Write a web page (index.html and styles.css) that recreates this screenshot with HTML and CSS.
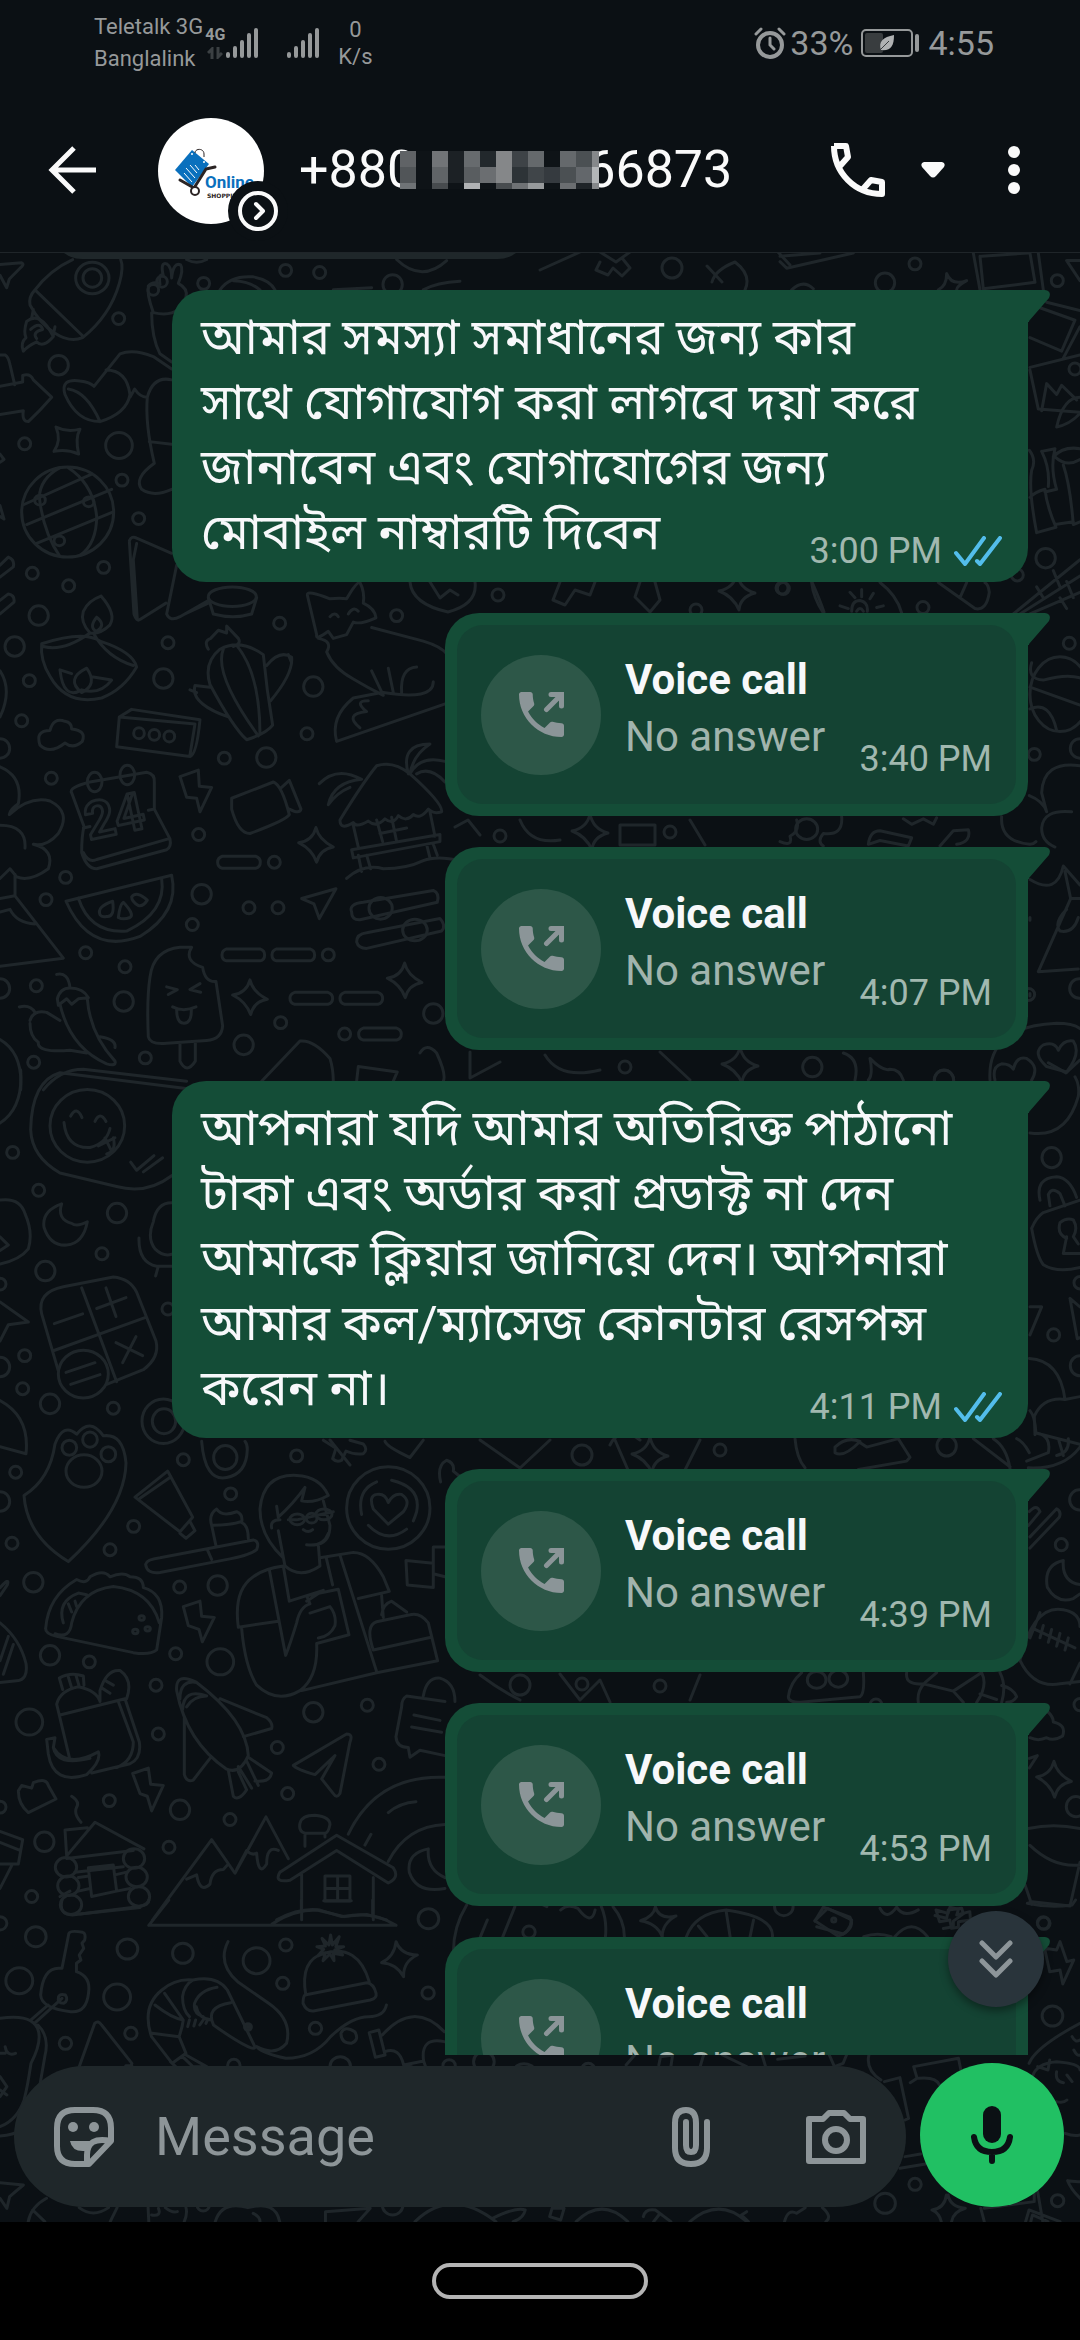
FILE: index.html
```html
<!DOCTYPE html>
<html lang="bn">
<head>
    <meta charset="UTF-8">
    <meta name="viewport" content="width=device-width, initial-scale=1">
    <title>Chat</title>
    <link rel="stylesheet" href="styles.css">
</head>
<body>

<!-- shared icons -->
<svg class="defs" width="0" height="0" aria-hidden="true">
    <symbol id="icon-call-out" viewBox="3 3 18 18">
        <path fill="currentColor" d="M6.62 10.79c1.44 2.83 3.76 5.14 6.59 6.59l2.2-2.2c.27-.27.67-.36 1.02-.24 1.12.37 2.33.57 3.57.57.55 0 1 .45 1 1V20c0 .55-.45 1-1 1-9.39 0-17-7.61-17-17 0-.55.45-1 1-1h3.5c.55 0 1 .45 1 1 0 1.25.2 2.45.57 3.57.11.35.03.74-.25 1.02l-2.2 2.2z"/>
        <path fill="none" stroke="currentColor" stroke-width="2" stroke-linecap="round" d="M14 10L19.6 4.4M15.8 4H20V8.6"/>
    </symbol>
    <symbol id="icon-read" viewBox="0 0 48 30">
        <path fill="none" stroke="#53bdeb" stroke-width="4" stroke-linecap="round" stroke-linejoin="round" d="M2 17L11 28L30 2M23 25L26 28L46 2"/>
    </symbol>
    <symbol id="icon-tail" viewBox="0 0 23 32">
        <path fill="#144d37" d="M0 0H17Q24 1 21 8L1 31V32H0Z"/>
    </symbol>
    <symbol id="icon-signal" viewBox="0 0 34 32">
        <path fill="none" stroke="currentColor" stroke-width="4" stroke-linecap="round" d="M3 27V29M10 21V29M17 15V29M24 8V29M31 3V29"/>
    </symbol>
</svg>

<div class="phone">
    <div class="status">
        <div class="carriers">
            <span>Teletalk 3G</span>
            <span>Banglalink</span>
        </div>
        <div class="network">
            <span>4G</span>
            <svg viewBox="0 0 16 12" width="16" height="12"><path d="M5 12V2L1 6M11 0V10L15 6" fill="none" stroke="#3b4043" stroke-width="3"/></svg>
        </div>
        <svg class="signal" aria-hidden="true"><use href="#icon-signal"/></svg>
        <svg class="signal signal-two" aria-hidden="true"><use href="#icon-signal"/></svg>
        <div class="speed">
            <span>0</span>
            <span>K/s</span>
        </div>
        <div class="status-right">
            <svg width="32" height="32" viewBox="0 0 32 32" fill="none" stroke="currentColor" stroke-width="4" aria-hidden="true">
                <circle cx="16" cy="18" r="12"/>
                <path stroke-width="3" stroke-linecap="round" d="M2 7L7 2M25 2L30 7M16 11V18L20 22"/>
            </svg>
            <span>33%</span>
            <svg class="battery" width="59" height="28" viewBox="0 0 59 28" aria-hidden="true">
                <rect x="1" y="1" width="50" height="26" rx="4" fill="none" stroke="currentColor" stroke-width="2"/>
                <rect x="4" y="4" width="18" height="20" rx="2" fill="#393d3f"/>
                <rect x="54" y="5" width="4" height="18" rx="2" fill="currentColor"/>
                <path d="M33 6C33 17 30 22 20 21C17 13 22 8 33 6Z" fill="#b0b2b3"/>
                <path d="M18 22L28 12" stroke="#393d3f" stroke-width="1"/>
            </svg>
            <span>4:55</span>
        </div>
    </div>

    <header class="appbar">
        <button class="icon-btn" type="button" aria-label="Back">
            <svg width="48" height="48" viewBox="0 0 48 48" fill="none" stroke="currentColor" stroke-width="5"><path d="M26 2L4 24L26 46M4 24H48"/></svg>
        </button>
        <div class="avatar">
            <svg width="122" height="122" viewBox="0 0 122 122" role="img" aria-label="Online Shopping">
                <circle cx="54" cy="54" r="53" fill="#fff"/>
                <path d="M35 33L52 47L35 70L18 53Z" fill="#0a70bd"/>
                <path d="M38 36C38 31 47 31 47 37V40" fill="none" stroke="#2b2424" stroke-width="1"/>
                <path d="M27 56L35 65M29 51L38 61M33 48L40 56M38 48L42 53" fill="none" stroke="#fff" stroke-width="1"/>
                <circle cx="35" cy="37" r="1" fill="#fff"/><circle cx="47" cy="45" r="1" fill="#fff"/>
                <path d="M58 50L49 52L37 71L23 63" fill="none" stroke="#2b2424" stroke-width="3" stroke-linecap="round" stroke-linejoin="round"/>
                <circle cx="38" cy="74" r="4" fill="#fff" stroke="#2b2424" stroke-width="2"/>
                <text class="logo-name" x="48" y="71">Online</text>
                <text class="logo-sub" x="50" y="81">SHOPPING</text>
                <circle cx="101" cy="94" r="30" fill="#0b1014"/>
                <circle cx="101" cy="94" r="18" fill="none" stroke="#fafafa" stroke-width="4"/>
                <path d="M99 87L106 94L99 101" fill="none" stroke="#fafafa" stroke-width="4" stroke-linecap="round" stroke-linejoin="round"/>
            </svg>
        </div>
        <h1 class="contact">
            <span>+880</span>
            <svg class="mask" viewBox="0 0 199 38" shape-rendering="crispEdges" aria-hidden="true">
                <rect width="199" height="38" fill="#0e1317"/>
                <path fill="#606366" d="M0 0h16v16H0z"/><path fill="#515558" d="M0 16h16v16H0z"/><path fill="#6f7376" d="M0 32h16v6H0z"/>
                <path fill="#717477" d="M32 0h16v16H32z"/><path fill="#606467" d="M32 16h16v16H32z"/><path fill="#474b4e" d="M32 32h16v6H32z"/>
                <path fill="#1c2125" d="M48 0h16v32H48z"/><path fill="#676b6e" d="M64 0h16v16H64z"/><path fill="#595d60" d="M64 16h16v16H64z"/><path fill="#b0b2b4" d="M64 32h16v6H64z"/>
                <path fill="#22282c" d="M80 0h16v16H80z"/><path fill="#6b6e71" d="M80 16h16v16H80z"/>
                <path fill="#858789" d="M96 0h16v32H96z"/><path fill="#484c4f" d="M96 32h16v6H96z"/>
                <path fill="#3e4347" d="M112 0h16v16H112z"/><path fill="#2d3337" d="M112 16h16v16H112z"/><path fill="#6f7275" d="M112 32h16v6H112z"/>
                <path fill="#65696c" d="M128 0h16v16H128z"/><path fill="#404549" d="M128 16h16v16H128z"/><path fill="#979a9c" d="M128 32h16v6H128z"/>
                <path fill="#353a3f" d="M144 16h16v16H144z"/>
                <path fill="#65696c" d="M160 0h16v16H160z"/><path fill="#4b5053" d="M160 16h16v16H160zM176 0h16v16H176z"/><path fill="#6b6e71" d="M160 32h16v6H160z"/>
                <path fill="#63676b" d="M176 16h16v16H176z"/><path fill="#1f2428" d="M176 32h16v6H176z"/>
                <path fill="#85888a" d="M192 0h7v16H192zM192 32h7v6H192z"/><path fill="#b3b6b8" d="M192 16h7v16H192z"/>
            </svg>
            <span>66873</span>
        </h1>
        <button class="icon-btn" type="button" aria-label="Voice call">
            <svg width="54" height="54" viewBox="0 0 54 54" fill="none" stroke="currentColor" stroke-width="6" stroke-linejoin="round"><path d="M3 3H15L17 14L9 23M3 3C3 30 24 51 51 51V39L40 37L32 46"/></svg>
        </button>
        <button class="icon-btn call-more" type="button" aria-label="Call options">
            <svg width="24" height="16" viewBox="0 0 24 16"><path fill="currentColor" d="M3 0H21Q25 1 23 5L15 14Q12 17 9 14L1 5Q-1 1 3 0Z"/></svg>
        </button>
        <button class="icon-btn menu" type="button" aria-label="More options">
            <svg width="12" height="48" viewBox="0 0 12 48" fill="currentColor"><circle cx="6" cy="6" r="6"/><circle cx="6" cy="24" r="6"/><circle cx="6" cy="42" r="6"/></svg>
        </button>
    </header>

    <main class="chat">
        <!-- doodle wallpaper -->
        <svg class="doodles" viewBox="0 253 1080 1969" preserveAspectRatio="xMidYMin slice" aria-hidden="true">
            <defs>
                <ellipse id="s" rx="18" ry="11"/>
                <ellipse id="m" rx="29" ry="18"/>
                <ellipse id="l" rx="40" ry="24"/>
                <circle id="d" r="6"/>
                <circle id="e" r="10"/>
                <circle id="f" r="13"/>
                <path id="spark" d="M0 -32Q8 -10 52 4Q12 8 2 32Q-12 8 -52 -4Q-10 -8 0 -32Z"/>
                <path id="star" d="M0 -18Q3 -3 18 1Q3 5 2 18Q-4 4 -18 -1Q-3 -4 0 -18Z"/>
                <path id="dash" d="M-50 -11H50Q64 -8 64 0Q64 9 50 11H-50Q-64 9 -64 0Q-64 -8 -50 -11Z"/>
            </defs>

            <g transform="translate(0 240) scale(.3333 .542)">
                <path d="M0 45L65 42Q75 45 60 52L28 72L20 88L0 65"/>
                <path d="M105 92Q150 55 218 36M105 92Q85 105 90 120Q120 155 165 172Q210 190 248 180Q330 140 358 80Q372 50 362 36M105 92L250 178M100 128L95 145M165 160L160 175"/>
                <ellipse cx="277" cy="70" rx="50" ry="29"/><ellipse cx="277" cy="70" rx="28" ry="17"/>
                <path d="M160 178Q120 130 80 150Q70 170 78 180Q60 190 70 205Q85 195 110 188Q130 200 160 178M92 165Q120 150 128 165Q95 170 110 182"/>
                <path d="M460 134Q440 100 445 85Q460 75 480 82Q475 60 490 66Q480 40 500 44Q515 50 515 70Q520 40 542 46Q552 55 535 80Q565 90 558 105Q540 145 460 134ZM455 134Q455 180 480 210L515 225"/>
                <ellipse cx="486" cy="77" rx="16" ry="10"/><ellipse cx="460" cy="92" rx="16" ry="10"/>
                <path d="M660 92Q690 65 760 68Q810 74 825 92M700 75Q750 76 780 92M1000 92L1115 88M560 36Q590 46 620 36M1190 36Q1265 80 1340 38M1270 92Q1310 78 1380 76"/>
                <path d="M0 212H15Q25 215 30 230L44 267M0 270L68 262V250Q90 245 100 258L155 290Q120 315 85 335Q65 335 70 315L0 322"/>
                <path d="M195 285Q180 255 240 260Q270 262 282 270L360 210Q400 200 460 215L515 238M195 285Q230 335 300 335Q380 320 390 285Q380 240 318 240M205 275Q260 280 300 335M390 290L404 275Q420 290 440 290M515 258Q460 250 442 290Q435 340 463 412Q400 440 425 460Q460 475 515 460M448 372L515 377"/>
                <path d="M168 345Q200 355 240 349Q225 365 236 395Q200 385 162 390Q185 370 168 345Z"/>
                <ellipse cx="203" cy="502" rx="138" ry="83"/>
                <path d="M72 488L275 432M80 525L335 460M108 560L338 502M180 420Q120 440 118 475Q130 540 180 584M205 420Q280 450 290 510Q290 560 240 582"/>
                <ellipse cx="120" cy="480" rx="16" ry="9"/><ellipse cx="266" cy="483" rx="16" ry="9"/><ellipse cx="178" cy="555" rx="16" ry="9"/>
                <path d="M388 555Q395 545 410 550L515 578M388 555L402 690Q410 705 420 700L498 670M410 560L400 590L412 700M530 600L500 690Q510 705 540 695L625 665M555 690L625 670"/>
                <ellipse cx="697" cy="658" rx="72" ry="18"/><path d="M625 660L640 690Q700 700 755 690L770 660"/>
                <path d="M0 395L12 405L0 410M0 490L12 515L0 510M0 600L25 585Q45 590 40 603L0 622M0 665L25 653Q45 655 42 668L0 690M0 795Q38 830 0 880"/>
                <path d="M303 657Q350 690 330 710Q300 728 270 725Q240 705 250 685Q265 665 303 657M290 696Q320 710 290 722Q265 715 290 696M125 745Q250 720 300 740Q400 760 410 788Q370 830 305 845Q200 860 150 805Q120 775 125 745ZM130 750Q190 760 270 725M280 725Q320 770 400 785M215 800L180 793Q190 850 245 830Q300 840 335 812L275 806M245 835Q195 810 260 790Q295 820 245 835Z"/>
                <path d="M625 755Q610 740 632 735L655 720L680 725L680 712L715 735Q725 745 700 750M630 820Q610 780 660 755Q720 735 790 765Q800 830 818 895Q800 910 740 922Q700 900 630 820ZM670 755Q640 800 775 915M710 748Q780 800 780 912M800 785Q840 755 875 770Q880 800 812 850M630 825L585 822Q570 855 685 880M570 830L590 835M865 765L875 780"/>
                <path d="M358 880L395 866L600 885Q590 950 570 953L350 935ZM358 880L585 893L570 950"/>
                <ellipse cx="417" cy="910" rx="16" ry="10"/><ellipse cx="463" cy="913" rx="16" ry="10"/><ellipse cx="508" cy="916" rx="16" ry="10"/>
                <path d="M120 932Q105 905 150 905Q160 880 195 888Q215 890 215 902Q260 905 247 925Q220 940 195 928Q150 950 120 932Z"/>
                <path d="M922 655Q920 645 990 662Q1020 660 1040 662Q1070 630 1080 632Q1095 650 1090 670Q1125 680 1128 697Q1080 710 1060 705L1040 728L1000 735L985 722Q945 740 950 728ZM1045 690Q1060 675 1075 685M990 695Q1005 685 1015 695M1115 715L1270 740Q1380 760 1340 800M955 735Q1000 740 980 760Q1000 790 1060 810Q1100 825 1150 840L1115 795M1150 835Q1300 850 1300 815M1180 835L1165 790M1205 835Q1200 790 1250 788M1340 855L1010 925Q990 880 1060 845L1145 835M1105 850Q1060 850 1100 870Q1030 875 1080 900"/>
                <path d="M215 1020Q205 1010 270 1000L440 982Q465 985 463 1000V1050L510 1105Q515 1120 500 1125L290 1160Q260 1160 245 1130Q245 1100 252 1082ZM250 1085L270 1082M445 1052L463 1050M250 1130Q265 1150 290 1143L505 1105"/>
                <ellipse cx="284" cy="1000" rx="22" ry="18"/><ellipse cx="382" cy="987" rx="22" ry="18"/>
                <path d="M540 990L595 978L598 1008L635 1010L600 1055L590 1030L560 1028ZM695 1030L820 1000Q845 1005 868 1060Q860 1070 750 1095Q715 1095 695 1050ZM845 1010L868 997L903 1050Q900 1060 868 1050"/>
                <path d="M0 972Q70 990 55 1040Q30 1050 28 1060Q90 1025 150 1035Q215 1055 175 1095Q140 1120 100 1115Q165 1125 145 1160Q90 1185 50 1175L30 1160L0 1178M0 1080Q80 1080 75 1122M45 1170V1210L190 1325L0 1340M0 1215L45 1210M0 1240L30 1235Q50 1260 105 1262"/>
                <path d="M958 1003Q1010 970 1085 995Q1000 1000 985 1042Q1010 1020 1050 1010M1020 1070Q1090 1000 1130 970Q1180 960 1230 985Q1330 1040 1325 1055Q1300 1060 1285 1050Q1260 1070 1240 1060Q1220 1075 1195 1062Q1180 1080 1155 1068Q1130 1085 1105 1072Q1070 1085 1060 1075Q1020 1090 1020 1070ZM1225 985Q1200 930 1290 930Q1240 950 1230 985Q1260 950 1335 962M1250 985Q1290 970 1335 1000M1060 1080L1075 1120M1290 1055L1305 1100M1130 1070L1148 1110M1175 1065L1190 1110M1055 1125L1320 1097L1320 1110L1060 1140ZM1075 1135L1085 1165M1100 1135L1112 1160M1280 1115L1290 1140M1300 1115L1312 1135M1140 1095L1220 1085M1040 1178Q1090 1150 1150 1160Q1220 1160 1270 1145Q1310 1135 1380 1145"/>
                <path d="M198 1220L515 1172Q540 1240 420 1285Q270 1320 198 1220ZM235 1214Q270 1280 380 1275Q500 1240 485 1178M300 1245Q290 1230 338 1220Q345 1250 320 1248Q305 1250 300 1245M355 1250Q360 1225 370 1222Q405 1245 390 1250Q370 1255 355 1250M395 1212Q410 1200 442 1218Q430 1230 415 1228Q395 1220 395 1212"/>
                <path d="M905 1215L1008 1197L958 1252L942 1225ZM1055 1240Q1045 1225 1090 1222L1300 1200Q1320 1205 1312 1222L1080 1254Q1055 1255 1055 1240ZM1070 1295Q1070 1280 1100 1278L1320 1252Q1340 1265 1325 1275L1100 1307Q1075 1307 1070 1295Z"/>
                <ellipse cx="1142" cy="1233" rx="35" ry="20"/><ellipse cx="1245" cy="1273" rx="37" ry="20"/>
                <path d="M445 1470Q440 1400 450 1360Q460 1310 540 1305H575Q550 1330 608 1342Q615 1370 648 1368L668 1450Q665 1475 620 1477L500 1482Q450 1485 445 1470ZM540 1482V1515Q560 1540 586 1515V1480M500 1378L532 1383L505 1392M600 1372L570 1383L602 1388M518 1415Q550 1425 588 1415M530 1420Q530 1445 552 1445Q575 1445 574 1420"/>
                <path d="M170 1355Q205 1350 210 1380M172 1400Q180 1380 210 1380Q250 1380 265 1398L235 1400L215 1410L200 1400L175 1412ZM262 1400Q270 1465 345 1515Q350 1525 320 1520Q210 1490 180 1410M58 1415Q90 1410 105 1425M90 1440Q100 1420 140 1425L180 1440M90 1445Q90 1470 115 1480Q110 1500 210 1495L260 1500M300 1470Q350 1475 345 1490"/>
                <path d="M0 1475Q70 1500 62 1568M130 1568Q180 1530 250 1530L560 1552M785 1552L900 1478Q940 1475 990 1510Q1000 1530 1000 1552M1070 1552L1075 1525L1192 1535L1180 1552M1260 1500Q1280 1480 1310 1500Q1340 1540 1330 1552"/>
                <use href="#spark" x="948" y="1116"/><use href="#spark" x="750" y="1397"/><use href="#spark" x="1214" y="1366"/>
                <use href="#dash" x="717" y="1148"/><use href="#dash" x="730" y="1319"/><use href="#dash" x="880" y="1319"/><use href="#dash" x="934" y="1399"/><use href="#dash" x="1084" y="1399"/><use href="#dash" x="1140" y="1465"/>
                <use href="#s" x="356" y="145"/><use href="#s" x="611" y="80"/><use href="#s" x="857" y="56"/><use href="#s" x="959" y="60"/><use href="#m" x="1178" y="82"/>
                <use href="#m" x="176" y="231"/><use href="#s" x="74" y="376"/><use href="#l" x="357" y="379"/><use href="#s" x="366" y="443"/><use href="#s" x="416" y="514"/><use href="#s" x="311" y="604"/>
                <use href="#s" x="97" y="615"/><use href="#s" x="206" y="638"/><use href="#m" x="116" y="693"/><use href="#m" x="44" y="750"/><use href="#s" x="88" y="813"/><use href="#s" x="504" y="743"/><use href="#m" x="490" y="809"/>
                <use href="#s" x="839" y="707"/><use href="#m" x="940" y="824"/><use href="#s" x="921" y="911"/><use href="#s" x="1190" y="693"/><use href="#s" x="65" y="887"/><use href="#m" x="0" y="938"/><use href="#s" x="154" y="993"/>
                <use href="#s" x="673" y="956"/><use href="#m" x="799" y="955"/><use href="#s" x="596" y="1097"/><use href="#s" x="823" y="1148"/><use href="#m" x="605" y="1207"/><use href="#s" x="747" y="1232"/><use href="#s" x="834" y="1232"/><use href="#s" x="577" y="1263"/>
                <use href="#s" x="197" y="1176"/><use href="#s" x="138" y="1217"/><use href="#s" x="257" y="1315"/><use href="#s" x="375" y="1341"/><use href="#m" x="371" y="1405"/><use href="#s" x="109" y="1376"/><use href="#m" x="0" y="1381"/><use href="#s" x="985" y="1319"/>
                <use href="#s" x="842" y="1444"/><use href="#m" x="731" y="1485"/><use href="#s" x="1034" y="1465"/><use href="#m" x="1300" y="1427"/><use href="#s" x="436" y="1509"/><use href="#s" x="101" y="1517"/>
            </g>
            <text x="89" y="840" transform="rotate(-12 89 840)">24</text>

            <g transform="translate(0 1070) scale(.3333 .542)">
                <path d="M92 110Q95 20 180 5L570 35M92 110Q95 160 180 190L350 215Q440 230 515 195M0 98Q70 70 62 0"/>
                <ellipse cx="262" cy="103" rx="112" ry="67"/>
                <path d="M212 85Q230 65 246 88M285 95Q300 75 318 95M192 97Q200 145 270 143Q320 135 330 108M295 140L345 125M315 125L335 150M340 125Q350 150 320 155M392 170L410 185L462 158M430 188L488 162"/>
                <path d="M0 240Q60 235 75 265Q100 300 85 330Q60 350 0 358M0 308L25 323L0 333M185 247Q125 260 132 290Q150 325 200 323Q250 320 262 280Q230 290 215 283Q170 275 185 247ZM515 245Q470 245 460 280Q440 310 465 330Q490 345 515 340M417 310Q415 355 470 362L515 362M475 362L467 380"/>
                <path d="M125 450Q110 410 190 400L340 382Q390 385 410 410L468 500Q480 530 430 553L320 580M125 450L175 555M160 518L435 457M245 402L350 575M163 468L248 450M290 440L378 420M318 402L348 455M368 540L408 492M348 503L428 527M198 558L285 540M212 580L300 562"/>
                <ellipse cx="250" cy="561" rx="75" ry="44"/>
                <path d="M0 428L85 465L25 470L0 500M0 610Q90 640 78 708L0 695"/>
                <ellipse cx="490" cy="648" rx="64" ry="41"/><ellipse cx="492" cy="648" rx="35" ry="23"/>
                <path d="M72 785Q150 755 165 690Q190 650 230 672Q270 640 310 675Q370 670 378 725Q375 810 205 907Q80 860 72 785Z"/>
                <ellipse cx="208" cy="697" rx="22" ry="14"/><ellipse cx="270" cy="682" rx="22" ry="14"/><ellipse cx="325" cy="709" rx="22" ry="14"/><ellipse cx="252" cy="740" rx="54" ry="30"/>
                <path d="M605 685Q615 760 680 752Q740 745 742 700Q742 690 735 685M405 788L503 740L578 825L540 852ZM420 790L510 752M540 855L558 864L585 850L570 833"/>
                <ellipse cx="676" cy="715" rx="35" ry="22"/>
                <path d="M970 683L1008 698L998 717Q1010 725 1025 720L1038 703Q1060 710 1090 708Q1105 700 1090 690L1050 683M1155 685Q1160 695 1230 715L1270 683"/>
                <path d="M437 912Q440 903 480 900L760 867Q780 870 770 885Q750 895 690 902L480 927Q440 930 437 912ZM622 885L635 903M648 878L635 840Q625 820 650 810Q665 825 710 815Q730 820 725 835Q745 840 745 865M640 840Q690 840 725 833"/>
                <path d="M850 900Q780 860 780 810Q790 745 890 748Q960 750 985 785Q940 800 905 795L915 770Q880 800 835 825L830 805M835 850L855 915Q900 940 960 915L955 875Q990 870 990 840L970 795M815 845Q810 830 840 830M865 830H890L1000 815M920 876Q970 880 985 855M910 848Q925 855 938 848"/>
                <ellipse cx="892" cy="829" rx="22" ry="10"/><ellipse cx="972" cy="820" rx="24" ry="10"/><ellipse cx="935" cy="827" rx="16" ry="9"/>
                <path d="M715 1028Q700 960 760 935Q790 920 850 915L868 980L970 960L920 980M715 1028L835 1017M808 922L857 1080Q870 1060 890 1020Q900 990 930 985L920 970L1015 958L1047 1042L950 1058Q955 1120 900 1145Q830 1170 770 1135Q735 1100 725 1030M930 1002L990 990Q1010 1005 1005 1025Q990 1045 955 1048M978 898L998 950M960 900L1060 890Q1110 890 1150 935L1168 962L1075 975M1020 895L1130 1110M905 1145L1130 1112L1313 1090L1285 1020Q1260 1000 1230 1005L1130 1018Q1095 1025 1120 1070L1290 1047M1145 970L1150 1010M1145 1005Q1150 985 1175 980L1220 1000"/>
                <ellipse cx="1165" cy="808" rx="125" ry="76"/>
                <path d="M1165 838L1120 810Q1105 785 1130 783Q1155 780 1165 798Q1180 780 1205 783Q1235 795 1210 815ZM1085 820Q1070 775 1130 760M1175 757Q1265 770 1250 815Q1245 825 1240 832M1105 840Q1160 875 1220 847M1218 905L1300 910V955L1222 950ZM1300 910V880H1335M1335 935L1303 930M1322 760Q1310 730 1340 720Q1365 725 1360 740L1380 750"/>
                <path d="M137 1030Q145 970 230 940Q260 950 270 935Q310 920 330 935Q370 925 390 935Q430 935 430 955Q490 965 485 1010L470 1070Q450 1080 400 1075L170 1045Q135 1040 137 1030ZM165 1040Q210 1050 215 1020Q240 960 340 953Q450 960 478 1020M190 1020Q170 980 235 965L260 968M205 985L215 1000M225 980L230 990"/>
                <ellipse cx="425" cy="1011" rx="8" ry="4"/><ellipse cx="443" cy="1031" rx="8" ry="4"/><ellipse cx="406" cy="1036" rx="8" ry="4"/>
                <path d="M550 990L600 980L605 1008L643 1010L607 1055L597 1032L565 1025ZM0 1020Q60 1050 78 1095Q85 1125 50 1127L0 1130M0 1090L25 1045M10 1115L40 1060M0 955Q30 935 22 950L0 970"/>
                <path d="M208 1268L170 1170Q180 1145 235 1138Q290 1145 300 1165M180 1190L375 1160L418 1240Q425 1270 390 1280L275 1297M355 1165L400 1240Q400 1275 350 1287M188 1143L178 1122Q210 1110 250 1118L252 1135M205 1120L215 1140M228 1117L238 1138M300 1145Q320 1105 360 1108Q400 1125 380 1160M300 1145L300 1165M320 1128L340 1135M305 1140L330 1150M140 1235L165 1232L160 1250Q200 1290 295 1258Q305 1275 260 1300Q160 1320 145 1262ZM160 1250Q170 1285 270 1270"/>
                <path d="M530 1145Q525 1110 590 1130Q740 1200 745 1265Q720 1300 680 1290Q560 1240 530 1145ZM548 1180Q550 1140 620 1155Q580 1155 560 1175M590 1130Q540 1125 540 1160M660 1160L800 1195Q820 1205 815 1215L730 1230M553 1195V1300Q560 1315 580 1310L630 1270M685 1292L700 1340Q715 1350 740 1328L715 1295M745 1268L815 1297Q810 1315 765 1312M715 1285L755 1325M740 1275L775 1320"/>
                <path d="M880 1283L1040 1225Q1060 1225 1050 1240L1020 1335Q1010 1345 1000 1335L965 1308L1005 1265L945 1300Q890 1290 880 1283ZM1335 1165L1220 1155Q1205 1160 1205 1175L1188 1230Q1190 1250 1225 1250L1230 1268L1260 1255L1335 1265M1270 1155Q1280 1120 1320 1122Q1365 1130 1365 1165M1242 1190L1320 1200M1235 1212L1325 1222"/>
                <path d="M55 1330L65 1320L95 1325L100 1315Q140 1305 145 1320L168 1345L85 1370Q55 1355 55 1330ZM398 1298L445 1288L452 1318L490 1320L455 1367L442 1340L420 1335ZM215 1340Q240 1350 230 1360Q220 1372 243 1388"/>
                <path d="M200 1450L195 1402L262 1398M200 1450L285 1388L432 1437M200 1455L400 1440M225 1480L370 1470M180 1525L210 1515M265 1472L340 1467L350 1515L275 1525ZM235 1490L268 1487M235 1515L270 1510M345 1485L380 1480M350 1515L390 1510M240 1557L420 1545"/>
                <ellipse cx="198" cy="1471" rx="32" ry="18"/><ellipse cx="205" cy="1505" rx="32" ry="18"/><ellipse cx="213" cy="1540" rx="32" ry="18"/><ellipse cx="402" cy="1455" rx="32" ry="18"/><ellipse cx="410" cy="1489" rx="32" ry="18"/><ellipse cx="417" cy="1525" rx="32" ry="18"/>
                <path d="M0 1405L68 1420L55 1465L0 1465M0 1425L60 1440M35 1468L0 1510M458 1568L635 1420L705 1482L798 1378L865 1455M560 1493L590 1485Q600 1520 630 1502Q635 1475 670 1475L685 1465M710 1475L740 1440Q755 1450 770 1445Q775 1490 800 1465Q800 1430 835 1440M840 1480L1010 1412L1180 1472Q1200 1490 1165 1500L1010 1440L870 1495Q820 1500 840 1480M905 1485V1568M1120 1490V1568M975 1487H1050V1533H975ZM1013 1487V1533M975 1510H1050M915 1432V1408Q895 1405 900 1390Q905 1375 945 1375Q990 1378 990 1392Q985 1408 975 1408V1415M915 1408H975M1045 1410Q1130 1300 1335 1305M1165 1370Q1200 1352 1248 1350M1165 1460Q1220 1395 1335 1392M1095 1430L1113 1410M1335 1490Q1280 1475 1285 1437Q1220 1445 1228 1480Q1250 1520 1335 1510"/>
                <path d="M830 1568Q900 1545 960 1550L1025 1562L1100 1558L1160 1568"/>
                <use href="#s" x="38" y="152"/><use href="#s" x="116" y="222"/><use href="#m" x="351" y="264"/><use href="#s" x="306" y="339"/><use href="#m" x="136" y="371"/><use href="#s" x="0" y="395"/><use href="#s" x="504" y="441"/><use href="#s" x="74" y="527"/><use href="#m" x="0" y="548"/>
                <use href="#s" x="68" y="588"/><use href="#m" x="150" y="616"/><use href="#s" x="340" y="624"/><use href="#s" x="47" y="742"/><use href="#m" x="0" y="796"/><use href="#s" x="36" y="873"/><use href="#s" x="550" y="719"/><use href="#s" x="692" y="782"/><use href="#s" x="890" y="712"/>
                <use href="#s" x="401" y="842"/><use href="#s" x="330" y="885"/><use href="#m" x="100" y="945"/><use href="#s" x="539" y="954"/><use href="#m" x="653" y="951"/><use href="#m" x="150" y="1080"/><use href="#s" x="268" y="1092"/><use href="#s" x="527" y="1077"/><use href="#l" x="661" y="1092"/>
                <use href="#s" x="468" y="1135"/><use href="#s" x="475" y="1225"/><use href="#l" x="88" y="1203"/><use href="#m" x="940" y="1185"/><use href="#s" x="1102" y="1172"/><use href="#s" x="832" y="1250"/><use href="#s" x="1137" y="1281"/><use href="#s" x="863" y="1335"/><use href="#s" x="328" y="1348"/>
                <use href="#m" x="540" y="1365"/><use href="#s" x="690" y="1383"/><use href="#m" x="133" y="1424"/><use href="#s" x="507" y="1434"/><use href="#s" x="95" y="1525"/><use href="#s" x="0" y="1360"/>
            </g>

            <g transform="translate(0 1900) scale(.3444 .3333)">
                <path d="M180 0Q170 45 210 45L400 20Q435 15 432 0M432 76L490 0M432 76H1150M790 72Q850 30 920 30L1000 50Q1080 30 1150 76M875 0V30M1082 0V42M940 2H1020"/>
                <path d="M200 100Q205 90 240 97Q250 100 246 120L238 130L243 145L230 165L235 180L222 190V215Q265 230 257 280Q250 340 205 335Q120 325 118 285Q125 205 170 205H180ZM180 295L100 370M140 315L90 360M170 290Q175 280 190 285Q200 300 185 310Q165 310 170 290"/>
                <path d="M0 355Q100 340 112 395Q120 430 90 490Q80 560 70 600Q50 660 0 680M110 375Q145 410 130 470L115 560M0 460H15M15 440Q20 470 45 460M0 530L20 560L0 590M0 570L20 585M0 708Q40 705 60 690M230 500L275 370Q285 360 295 375L383 490L380 500M365 497H383"/>
                <path d="M500 490Q470 450 440 410Q410 320 470 270Q510 235 560 240Q630 225 660 270L740 440Q740 450 720 440Q680 420 620 375Q595 320 670 308M500 490L540 460L520 410L442 400M520 410Q530 380 532 360Q500 355 450 315M532 360L478 280M550 350Q530 330 530 290Q535 255 560 240M590 350Q560 340 565 310Q580 270 630 262M615 360Q575 355 570 320M545 380L550 360M563 378L568 360M580 375L590 360M598 370L603 358M495 485L510 500M540 465L600 500H560L530 470"/>
                <path d="M662 125Q630 190 690 245L780 310Q850 360 832 430Q800 470 745 440Q760 460 830 475Q910 475 960 410Q1020 350 1070 350Q1115 350 1122 315M990 400Q1000 375 1030 395Q1045 420 1020 430Q990 430 990 400"/>
                <circle cx="720" cy="381" r="10" fill="#1f262a"/>
                <path d="M888 285Q870 180 940 160Q1040 130 1072 245M885 285L1065 248Q1085 250 1092 280Q1095 295 1075 300L910 333Q890 335 880 310Q880 290 885 285ZM960 105L965 135L985 110L975 140L998 140L972 150L995 165L968 160L970 182L958 162L938 182L945 158L922 168L940 148L920 140L945 138L935 115L955 135Z"/>
                <path d="M1150 125Q1165 165 1212 165Q1170 185 1172 230Q1150 190 1108 188Q1145 170 1150 125ZM1355 15Q1305 100 1320 200M1415 60L1395 110M1495 20L1460 110M1072 398L1100 390L1118 465L1090 472ZM1110 405Q1200 300 1290 395M1118 455Q1160 440 1172 495L1230 483Q1220 410 1290 425M1230 483L1235 498M1172 495L1195 500M1500 498Q1520 485 1545 498"/>
                <path d="M0 848L68 855Q50 870 28 890L20 925L0 895M82 965Q90 920 135 895M95 930L130 965M230 923Q270 955 315 923M340 923L320 965M430 923L432 965M440 945Q470 950 460 925M480 923Q500 940 515 935M540 923Q545 940 535 965M625 965Q645 900 720 923Q800 900 812 965M735 940Q755 950 755 965M945 965V935L1075 925L1040 965M1205 965Q1310 860 1440 965M1430 955Q1500 920 1525 930Q1520 955 1490 965"/>
                <use href="#e" transform="translate(104 110) scale(3)"/><use href="#e" transform="translate(370 147) scale(3)"/><use href="#e" transform="translate(531 160) scale(3)"/><use href="#f" transform="translate(56 242) scale(3)"/><use href="#f" transform="translate(340 291) scale(3)"/><use href="#f" transform="translate(745 182) scale(3)"/><use href="#e" transform="translate(1244 56) scale(3)"/>
                <use href="#d" transform="translate(830 135) scale(3)"/><use href="#d" transform="translate(821 250) scale(3)"/><use href="#d" transform="translate(1243 279) scale(3)"/><use href="#d" transform="translate(916 385) scale(3)"/><use href="#d" transform="translate(380 400) scale(3)"/><use href="#d" transform="translate(190 430) scale(3)"/><use href="#e" transform="translate(988 500) scale(3)"/><use href="#d" transform="translate(679 496) scale(3)"/><use href="#e" transform="translate(1405 485) scale(3)"/><use href="#d" transform="translate(1304 497) scale(3)"/><use href="#d" transform="translate(1536 96) scale(3)"/>
                <use href="#e" transform="translate(1140 915) scale(3)"/><use href="#d" transform="translate(590 915) scale(3)"/><use href="#e" transform="translate(0 70) scale(2)"/>
            </g>

            <g transform="translate(540 1900) scale(.3444 .3333)">
                <path d="M0 10L20 20M60 30Q80 10 110 25Q150 80 160 30M178 20Q195 60 190 110M212 20Q245 60 245 110M335 20Q345 60 395 48Q355 70 355 110Q340 70 292 62Q330 50 335 20ZM425 110Q450 40 540 30Q680 50 675 110M460 78L485 110M540 30L552 110M620 60L610 110M835 25L905 60Q900 100 865 108L798 62ZM1030 110Q1080 50 1125 110M940 110Q980 95 1020 110M1150 30L1185 40L1190 22L1215 28L1210 45L1248 35L1250 60L1215 65V82L1195 85L1190 60L1160 65Z"/>
                <path d="M1415 10Q1480 25 1545 15L1555 0M1465 145L1500 150L1510 125L1530 185L1550 180L1518 252L1510 210L1480 215ZM1420 490Q1440 440 1568 370M1430 530Q1440 490 1500 485Q1568 490 1568 510M1445 500L1475 510L1480 480M1500 515Q1495 545 1520 548M1530 525L1545 545M1500 605Q1520 610 1530 600M1525 700Q1550 710 1568 705M250 495L275 465M345 495L350 470L385 465L380 500M465 500L475 465M530 465L600 500M645 465L655 500M690 478L770 468M840 465L855 500L880 490L890 465M955 465Q945 510 990 540M1000 545L1045 533L1070 655L1060 660M1075 548L1095 535L1085 500L1215 475L1222 510M1100 535Q1150 530 1160 555M1045 805L1120 792M1060 770L1105 762M1545 410Q1555 430 1568 420M1550 450Q1560 470 1568 465"/>
                <path d="M35 925H70L60 960L28 950ZM105 965Q180 890 255 965M300 950Q305 925 335 930L380 965M330 965L345 945M435 965Q520 890 600 965M600 935L585 945L605 965M710 965Q720 925 745 940L770 923M820 923Q850 950 830 965M1185 885Q1190 920 1235 925Q1200 935 1195 965M1180 885Q1175 925 1138 930Q1160 940 1165 965M1290 925L1435 905V880M1445 875L1460 965M1280 925L1290 965M1410 965L1420 930L1510 965M1425 965L1430 945L1475 965M1532 842Q1560 845 1568 845M1532 842Q1540 865 1568 895"/>
                <use href="#e" transform="translate(708 20) scale(2.7)"/><use href="#e" transform="translate(1488 348) scale(3)"/><use href="#d" transform="translate(1463 70) scale(3)"/><use href="#d" transform="translate(1089 853) scale(3)"/><use href="#e" transform="translate(1002 910) scale(3)"/><use href="#d" transform="translate(1503 902) scale(3)"/><circle cx="853" cy="60" r="6"/><circle cx="140" cy="510" r="20"/>
            </g>

            <g transform="translate(780 240) scale(.3333 .542)">
                <path d="M0 40L20 52L220 24M0 30L120 24M35 92Q70 72 100 90M475 92Q500 85 500 62Q515 85 560 75Q530 85 530 92M580 24L600 92M600 30L610 90L765 78L750 24M605 30L745 24M775 24L790 92M860 38L900 75M860 38H900"/>
                <path d="M800 115L900 130M780 125L885 148L845 205L750 180M900 160L850 218M750 235L900 212M750 240L775 312L900 318M785 315L800 265L830 285L845 268L890 295M900 290Q850 290 830 345Q870 340 900 320M748 388Q770 405 755 425Q745 460 770 540L828 530Q800 490 795 460Q765 465 750 475M785 390L825 385Q810 420 830 460L795 465M820 400Q850 380 900 385M825 400Q860 420 900 405M850 415Q870 450 880 525L900 520M825 525L880 520M805 455Q810 420 785 390"/>
                <path d="M700 690L900 590M720 690L900 620M750 690L900 650M820 610L840 640M860 630L880 660M840 660L860 680M770 640L790 660M95 632Q100 660 130 688M300 632Q350 655 365 688M180 675L205 680M210 650L225 660M245 645V658M280 652L270 662M310 675L290 678M215 685Q215 665 240 665Q265 668 262 685M230 685Q240 675 250 685M475 632L585 680Q620 685 628 650Q625 635 615 632M540 660L560 632"/>
                <ellipse cx="840" cy="838" rx="90" ry="69"/>
                <path d="M755 780Q740 810 790 812Q860 800 900 808M750 825L900 858M750 865Q810 850 830 905"/>
                <path d="M900 970Q790 960 785 1020L800 1055M748 1025Q790 1035 800 1055M875 1055Q790 1050 785 1085Q785 1110 825 1120M665 1064Q660 1110 750 1115Q760 1115 768 1110M750 1180Q830 1210 850 1155L900 1190M855 1165L872 1215L775 1350L895 1345M872 1215H900M860 1235Q820 1260 840 1275Q880 1280 895 1250M185 1064Q190 1100 130 1095Q110 1110 130 1118M0 1110Q40 1120 30 1100Q60 1090 50 1070M265 1115Q270 1090 300 1090L395 1103L385 1118L300 1108ZM370 1068L395 1078L430 1068L460 1078L470 1066M480 1118L520 1090L565 1088Q575 1110 530 1115"/>
                <ellipse cx="80" cy="1087" rx="33" ry="19"/>
                <path d="M190 1500Q240 1510 225 1550M265 1550Q280 1540 270 1510Q310 1535 330 1530Q360 1530 370 1550M630 1550Q620 1450 830 1445Q880 1445 900 1455M645 1550Q635 1525 665 1520Q690 1520 700 1530Q710 1505 740 1510Q780 1525 755 1550M860 1535L800 1525Q755 1500 790 1485Q825 1478 835 1495Q850 1475 880 1478Q905 1500 860 1535M750 1250V1255M750 1390V1395"/>
                <use href="#s" x="405" y="44"/><use href="#m" x="315" y="79"/><use href="#s" x="832" y="75"/><use href="#s" x="885" y="238"/><use href="#m" x="797" y="587"/><use href="#s" x="712" y="618"/><use href="#s" x="429" y="678"/><use href="#s" x="868" y="744"/><use href="#s" x="763" y="949"/><use href="#m" x="900" y="938"/><use href="#m" x="97" y="1526"/><use href="#m" x="492" y="1550"/><use href="#m" x="898" y="1381"/><use href="#s" x="10" y="643"/><use href="#s" x="746" y="1392"/>
            </g>

            <g transform="translate(780 1060) scale(.3333 .561)">
                <path d="M750 130Q860 140 895 65Q900 45 885 30M805 5L858 23L900 0M780 250Q765 210 830 208Q870 210 890 245M810 260L805 240Q815 225 840 238L855 260M755 300Q770 280 790 272L900 250M755 300Q770 350 790 365Q830 380 900 370M860 315L850 345H900M860 318Q830 310 840 290Q860 280 880 285Q895 300 880 315L895 328M750 440H785L750 490M870 425L900 440M870 425L892 497L900 495"/>
                <path d="M748 532Q840 535 855 605M765 668L763 635Q790 600 855 605L900 600M750 625Q765 635 768 665L900 685M748 700Q730 680 710 675M740 715L805 700Q815 670 770 665M830 705Q870 700 865 675M835 675L850 705M900 690Q850 730 745 727M45 675Q50 710 75 727M165 690Q200 670 240 680Q190 710 165 700ZM235 680L260 690L355 675L390 708L380 715L235 730M580 675L690 725M640 675Q680 690 690 728"/>
                <path d="M748 805Q770 790 780 805L745 830M750 850L830 800Q845 805 838 815L750 870M850 892Q790 900 802 940Q830 970 880 960L900 952M850 892Q845 930 900 935M720 1070Q760 970 850 980Q900 985 900 1010M720 1070Q760 1120 840 1112L900 1108M765 1015L885 1048M790 1008L780 1030M815 1015L805 1038M840 1022L830 1045M865 1030L855 1052M870 1112L900 1075M750 1030L780 985"/>
                <path d="M65 1092Q30 1110 25 1135Q25 1145 60 1145L240 1135Q255 1130 250 1092M380 1092Q375 1115 430 1112M470 1092L435 1110Q410 1125 415 1145M430 1112L520 1125L605 1092M520 1125L550 1145M605 1092Q625 1115 590 1145M660 1092Q680 1115 665 1145M600 1130L650 1140M665 1115Q700 1120 710 1135Q700 1145 680 1145M800 1160Q820 1170 820 1180Q860 1185 848 1205Q820 1215 800 1208Q775 1215 750 1208M748 1245L772 1240L748 1262M745 1370Q820 1360 900 1370M750 1400Q820 1440 900 1435M735 1470L755 1505M750 1500L870 1508L900 1430"/>
                <ellipse cx="110" cy="1105" rx="28" ry="15"/><ellipse cx="175" cy="1103" rx="28" ry="15"/>
                <path d="M105 1535L130 1510L210 1528Q225 1545 190 1558L110 1545M300 1512Q320 1535 350 1510Q370 1530 415 1515M465 1525L500 1530L505 1515L545 1512L550 1522L520 1535V1545L490 1548"/>
                <use href="#spark" x="822" y="1282"/><use href="#m" x="815" y="174"/><use href="#s" x="821" y="490"/><use href="#m" x="900" y="545"/><use href="#m" x="500" y="688"/><use href="#m" x="898" y="784"/><use href="#s" x="844" y="864"/><use href="#s" x="900" y="1149"/><use href="#m" x="888" y="1331"/><use href="#s" x="790" y="1538"/><use href="#s" x="900" y="397"/><use href="#m" x="492" y="36"/><use href="#s" x="288" y="1150"/>
            </g>

            <!-- strips between the bubbles -->
            <g>
                <path d="M540 270L580 252M600 252L616 262L630 252M600 262L596 270L608 275L613 268L622 276L630 268L622 258M712 282Q715 270 735 262Q752 275 745 290M707 266L722 282M778 252L790 265M410 582Q412 604 448 612Q478 604 475 582M430 582L440 598L450 590L458 595M560 582L553 600L565 605L575 590L590 595L595 582M640 582L635 597L650 612L660 600L655 582M812 582Q820 600 824 612M455 827L468 820L480 835M520 820Q530 845 560 840M690 820L705 845M620 825H655V845H620Z"/>
                <path d="M470 1052V1078L500 1062M545 1055Q560 1080 600 1070M660 1052L690 1080M330 1440L350 1465M610 1445Q620 1425 640 1440M615 1440L628 1470M700 1440L685 1470M480 1440L520 1468L550 1440M560 1674L580 1700L600 1680L610 1702M700 1675L690 1700M480 1675Q500 1690 520 1700"/>
                <use href="#star" x="737" y="592"/><use href="#star" x="590" y="832"/><use href="#star" x="740" y="1065"/><use href="#star" x="650" y="1455"/>
                <use href="#d" x="498" y="595"/><use href="#d" x="696" y="610"/><use href="#d" x="782" y="588"/><use href="#e" x="672" y="268"/><use href="#d" x="500" y="836"/><use href="#d" x="670" y="832"/><use href="#d" x="625" y="1067"/><use href="#e" x="582" y="1455"/><use href="#d" x="720" y="1450"/><use href="#e" x="520" y="1685"/><use href="#d" x="582" y="1684"/><use href="#d" x="660" y="1686"/>
            </g>
        </svg>

        <div class="messages">
            <div class="bubble-in"></div>

            <div class="bubble bubble-text">
                <svg class="tail" aria-hidden="true"><use href="#icon-tail"/></svg>
                <p>আমার সমস্যা সমাধানের জন্য কার<br>সাথে যোগাযোগ করা লাগবে দয়া করে জানাবেন এবং যোগাযোগের জন্য মোবাইল নাম্বারটি দিবেন</p>
                <div class="meta"><time>3:00 PM</time><svg class="ticks" aria-hidden="true"><use href="#icon-read"/></svg></div>
            </div>

            <div class="bubble bubble-call">
                <svg class="tail" aria-hidden="true"><use href="#icon-tail"/></svg>
                <div class="call">
                    <div class="call-icon"><svg aria-hidden="true"><use href="#icon-call-out"/></svg></div>
                    <div class="call-info"><strong>Voice call</strong><span>No answer</span></div>
                    <time>3:40 PM</time>
                </div>
            </div>

            <div class="bubble bubble-call">
                <svg class="tail" aria-hidden="true"><use href="#icon-tail"/></svg>
                <div class="call">
                    <div class="call-icon"><svg aria-hidden="true"><use href="#icon-call-out"/></svg></div>
                    <div class="call-info"><strong>Voice call</strong><span>No answer</span></div>
                    <time>4:07 PM</time>
                </div>
            </div>

            <div class="bubble bubble-text">
                <svg class="tail" aria-hidden="true"><use href="#icon-tail"/></svg>
                <p>আপনারা যদি আমার অতিরিক্ত পাঠানো টাকা এবং অর্ডার করা প্রডাক্ট না দেন আমাকে ক্লিয়ার জানিয়ে দেন। আপনারা আমার কল/ম্যাসেজ কোনটার রেসপন্স করেন না।</p>
                <div class="meta"><time>4:11 PM</time><svg class="ticks" aria-hidden="true"><use href="#icon-read"/></svg></div>
            </div>

            <div class="bubble bubble-call">
                <svg class="tail" aria-hidden="true"><use href="#icon-tail"/></svg>
                <div class="call">
                    <div class="call-icon"><svg aria-hidden="true"><use href="#icon-call-out"/></svg></div>
                    <div class="call-info"><strong>Voice call</strong><span>No answer</span></div>
                    <time>4:39 PM</time>
                </div>
            </div>

            <div class="bubble bubble-call">
                <svg class="tail" aria-hidden="true"><use href="#icon-tail"/></svg>
                <div class="call">
                    <div class="call-icon"><svg aria-hidden="true"><use href="#icon-call-out"/></svg></div>
                    <div class="call-info"><strong>Voice call</strong><span>No answer</span></div>
                    <time>4:53 PM</time>
                </div>
            </div>

            <div class="bubble bubble-call">
                <svg class="tail" aria-hidden="true"><use href="#icon-tail"/></svg>
                <div class="call">
                    <div class="call-icon"><svg aria-hidden="true"><use href="#icon-call-out"/></svg></div>
                    <div class="call-info"><strong>Voice call</strong><span>No answer</span></div>
                </div>
            </div>
        </div>

        <button class="scroll-down" type="button" aria-label="Scroll to bottom">
            <svg width="34" height="40" viewBox="0 0 34 40" fill="none" stroke="currentColor" stroke-width="5" stroke-linecap="round" stroke-linejoin="round"><path d="M3 4L17 18L31 4M3 22L17 36L31 22"/></svg>
        </button>

        <form class="composer">
            <div class="field">
                <button class="icon-btn" type="button" aria-label="Stickers">
                    <svg width="60" height="60" viewBox="0 0 60 60">
                        <path fill="none" stroke="currentColor" stroke-width="6" stroke-linejoin="round" d="M21 3H39Q57 3 57 21V34L35 57H21Q3 57 3 39V21Q3 3 21 3ZM57 34Q33 29 33 48V57"/>
                        <circle cx="19" cy="20" r="5" fill="currentColor"/><circle cx="40" cy="20" r="5" fill="currentColor"/>
                        <path fill="currentColor" d="M16 34H37L31 44Q18 45 16 34Z"/>
                    </svg>
                </button>
                <input type="text" placeholder="Message" aria-label="Message">
                <button class="icon-btn" type="button" aria-label="Attach">
                    <svg width="38" height="60" viewBox="0 0 38 60" fill="none" stroke="currentColor" stroke-width="6" stroke-linecap="round"><path d="M35 15V41Q35 57 19 57Q3 57 3 41V16Q3 3 14 3Q24 3 24 16V38Q24 45 19 45Q14 45 14 38V15"/></svg>
                </button>
                <button class="icon-btn camera" type="button" aria-label="Camera">
                    <svg width="60" height="54" viewBox="0 0 60 54" fill="none" stroke="currentColor" stroke-width="6" stroke-linejoin="round"><path d="M3 9H17L23 3H38L44 9H57V51H3Z"/><circle cx="30" cy="30" r="11"/></svg>
                </button>
            </div>
            <button class="mic" type="button" aria-label="Record voice message">
                <svg width="42" height="58" viewBox="0 0 42 58"><rect x="12" y="0" width="18" height="37" rx="9" fill="currentColor"/><path fill="none" stroke="currentColor" stroke-width="6" stroke-linecap="round" d="M3 31Q5 46 21 46Q37 46 39 31M21 46V55"/></svg>
            </button>
        </form>
    </main>

    <nav class="navbar">
        <button class="home" type="button" aria-label="Home"></button>
    </nav>
</div>
</body>
</html>
```

FILE: styles.css
```css
* {box-sizing: border-box;}
body {margin: 0; background: #0b1014; color: #f7f8fa;
    font-family: Roboto, "Noto Sans Bengali", "Noto Sans", sans-serif;}
button {margin: 0; padding: 0; border: 0; background: none; color: inherit; font: inherit;}
svg {display: block;}
.defs {position: absolute;}

.phone {display: flex; flex-direction: column; height: 100vh; overflow: hidden;}

/* status bar */
.status {display: flex; align-items: center; flex: none; height: 88px; padding: 0 86px 2px 94px;
    color: #96999a; font-size: 22px; line-height: 32px;}
.carriers {display: flex; flex-direction: column;}
.network {display: flex; flex-direction: column; align-items: center; gap: 4px; margin-left: 2px;
    font-size: 16px; font-weight: bold; line-height: 16px;}
.signal {width: 34px; height: 32px;}
.signal-two {margin-left: 27px;}
.speed {display: flex; flex-direction: column; align-items: center; margin-left: 18px; line-height: 27px;}
.status-right {display: flex; align-items: center; gap: 4px; margin-left: auto; font-size: 34px;}
.battery {margin: 0 4px;}

/* app bar */
.appbar {display: flex; align-items: center; flex: none; height: 165px; padding: 0 60px 0 48px;
    border-bottom: 1px solid #1f2529; color: #fafafa;}
.icon-btn {flex: none;}
.avatar {width: 107px; height: 107px; margin-left: 61px;}
.avatar svg {overflow: visible;}
.logo-name {font-size: 17px; font-weight: bold; fill: #0a70bd;}
.logo-sub {font-family: "DejaVu Sans", sans-serif; font-size: 6px; font-weight: bold; fill: #2b2424;}
.contact {display: flex; align-items: center; flex: 1; margin: 0 0 0 35px;
    font-size: 52px; font-weight: normal; line-height: 64px; white-space: nowrap;}
.mask {width: 199px; height: 38px; margin: 0 -13px 0 -16px; z-index: 1;}
.call-more {margin-left: 36px;}
.menu {margin-left: 63px;}

/* chat */
.chat {position: relative; display: flex; flex-direction: column; flex: 1; min-height: 0;}
.doodles {position: absolute; top: 0; left: 0; width: 100%; height: 100%;
    fill: none; stroke: #1f262a; stroke-linecap: round; stroke-linejoin: round;}
.doodles path, .doodles ellipse, .doodles circle, .doodles text {stroke-width: 3px; vector-effect: non-scaling-stroke;}
.doodles text {font-size: 52px; font-weight: bold;}
.messages {position: relative; display: flex; flex-direction: column; align-items: flex-end; gap: 31px;
    flex: 1; min-height: 0; padding: 0 52px; overflow: hidden;}
.messages > * {flex: none;}
.bubble-in {align-self: flex-start; width: 476px; height: 60px; margin-top: -54px;
    border-radius: 34px; background: #1f272a;}
.bubble {position: relative; border-radius: 34px 0 34px 34px; background: #144d37;}
.tail {position: absolute; top: 0; left: 100%; width: 23px; height: 32px;}

.bubble-text {display: grid; width: 856px; max-width: 100%; padding: 15px 29px 17px;}
.bubble-text p {grid-area: 1 / 1; margin: 0; font-size: 49px; line-height: 65px;}
.meta {grid-area: 1 / 1; display: flex; align-items: center; gap: 12px;
    align-self: end; justify-self: end; margin: 0 -3px -4px 0;}
time {color: #a1b8af; font-size: 36px; line-height: 36px;}
.ticks {width: 48px; height: 30px;}

.bubble-call {padding: 12px;}
.call {display: flex; align-items: center; width: 559px; height: 179px; padding: 0 24px;
    border-radius: 26px; background: #144333;}
.call-icon {display: flex; align-items: center; justify-content: center; flex: none;
    width: 120px; height: 120px; border-radius: 50%; background: #2d5748; color: #8b9598;}
.call-icon svg {width: 45px; height: 45px;}
.call-info {display: flex; flex-direction: column; margin-left: 24px; padding-bottom: 14px; font-size: 42px; line-height: 57px;}
.call-info span {color: #a1b4ad;}
.call time {align-self: flex-end; margin: 0 0 27px auto;}

.scroll-down {position: absolute; right: 36px; bottom: 215px; display: flex; align-items: center; justify-content: center;
    width: 96px; height: 96px; border-radius: 50%; background: #29343b; color: #8d9599;
    box-shadow: 0 4px 8px rgba(0, 0, 0, .4);}

/* composer */
.composer {position: relative; display: flex; align-items: flex-end; gap: 14px; flex: none;
    padding: 8px 16px 15px 14px;}
.field {display: flex; align-items: center; flex: 1; min-width: 0; height: 141px; padding: 0 40px;
    border-radius: 71px; background: #1f272a; color: #8d9598;}
.field input {flex: 1; min-width: 0; margin: 0 0 0 41px; padding: 0; border: 0; outline: 0;
    background: none; color: #f7f8fa; font: inherit; font-size: 54px;}
.field input::placeholder {color: #8d9598; opacity: 1;}
.camera {margin-left: 96px;}
.mic {display: flex; align-items: center; justify-content: center; flex: none;
    width: 144px; height: 144px; border-radius: 50%; background: #21c063; color: #0b1014;}

/* system navigation */
.navbar {display: flex; align-items: center; justify-content: center; flex: none; height: 118px; background: #000;}
.home {width: 216px; height: 36px; border: 4px solid #b4b4b4; border-radius: 18px;}
```
